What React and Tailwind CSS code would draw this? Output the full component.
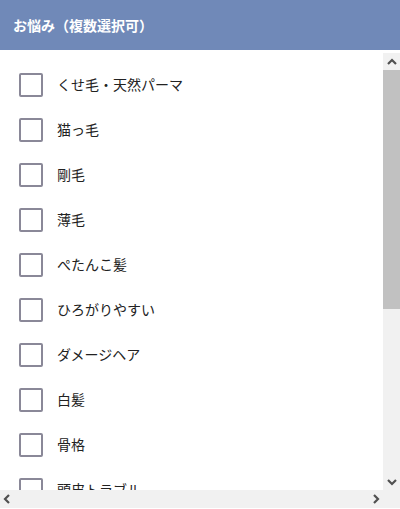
import React from "react";

const items = [
  "くせ毛・天然パーマ",
  "猫っ毛",
  "剛毛",
  "薄毛",
  "ぺたんこ髪",
  "ひろがりやすい",
  "ダメージヘア",
  "白髪",
  "骨格",
  "頭皮トラブル",
  "乾燥",
  "枝毛・切れ毛",
  "抜け毛",
  "顔型",
  "その他",
];

function Chevron({ dir }) {
  const d = {
    up: "M1 6 L5 2 L9 6",
    down: "M1 2 L5 6 L9 2",
    left: "M6 1 L2 5 L6 9",
    right: "M2 1 L6 5 L2 9",
  }[dir];
  const vertical = dir === "up" || dir === "down";
  return (
    <svg
      width={vertical ? 10 : 8}
      height={vertical ? 8 : 10}
      viewBox={vertical ? "0 0 10 8" : "0 0 8 10"}
      fill="none"
      stroke="#505050"
      strokeWidth="2.2"
    >
      <path d={d} />
    </svg>
  );
}

export default function App() {
  return (
    <div
      className="w-[400px] h-[509px] bg-white flex flex-col overflow-hidden"
      style={{ fontFamily: '"Noto Sans CJK JP", "Noto Sans", sans-serif' }}
    >
      <div className="h-[50px] shrink-0 bg-[#7089b8] flex items-center px-[13px]">
        <span className="text-white text-[14px] font-bold">お悩み（複数選択可）</span>
      </div>
      <div className="h-[440px] shrink-0 flex">
        <div className="flex-1 overflow-hidden pt-[12px]">
          {items.map((t) => (
            <label key={t} className="h-[45px] flex items-center pl-[19px]">
              <span className="w-[24px] h-[24px] border-2 border-[#8a8898] rounded-[2px] shrink-0" />
              <span className="ml-[14px] text-[14px] text-[#222]">{t}</span>
            </label>
          ))}
        </div>
        <div className="w-[17px] shrink-0 pt-[3px] flex flex-col">
          <div className="h-[17px] bg-[#f1f1f1] flex items-center justify-center">
            <Chevron dir="up" />
          </div>
          <div className="h-[239px] bg-[#c1c1c1]" />
          <div className="flex-1 bg-[#f1f1f1]" />
          <div className="h-[17px] bg-[#f1f1f1] flex items-center justify-center">
            <Chevron dir="down" />
          </div>
        </div>
      </div>
      <div className="h-[18px] shrink-0 flex">
        <div className="flex-1 bg-[#f1f1f1] flex items-center justify-between px-[3px]">
          <Chevron dir="left" />
          <Chevron dir="right" />
        </div>
        <div className="w-[17px] bg-[#f1f1f1]" />
      </div>
    </div>
  );
}
